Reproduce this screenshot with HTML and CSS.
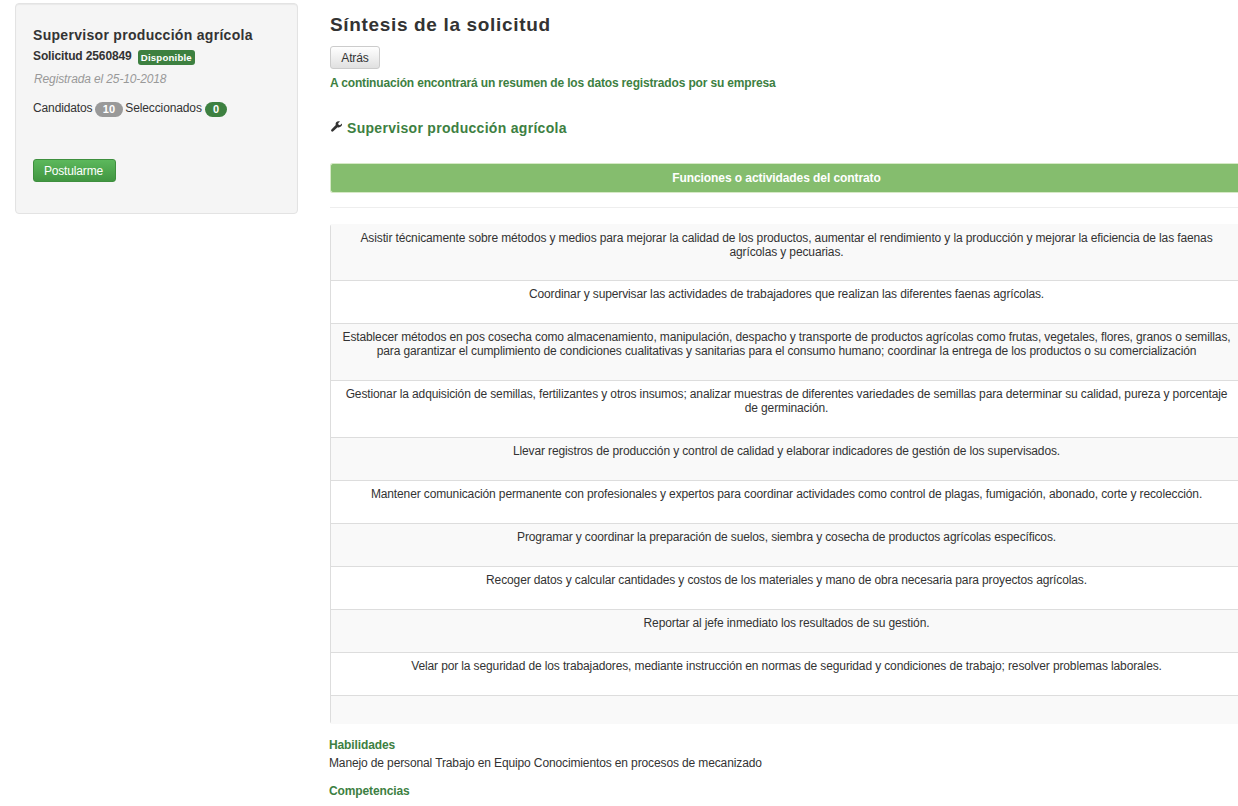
FILE: index.html
```html
<!DOCTYPE html>
<html lang="es">
<head>
<meta charset="utf-8">
<title>Síntesis de la solicitud</title>
<link rel="stylesheet" href="styles.css">
</head>
<body>
<aside class="sidebar">
  <div class="well">
    <h4 class="job-title">Supervisor producción agrícola</h4>
    <div class="req"><strong>Solicitud 2560849</strong> <span class="label">Disponible</span></div>
    <div class="date">Registrada el 25-10-2018</div>
    <div class="counts">Candidatos <span class="badge">10</span> Seleccionados <span class="badge badge-green">0</span></div>
    <button class="btn-apply" type="button">Postularme</button>
  </div>
</aside>
<main class="content">
  <h3 class="page-title">Síntesis de la solicitud</h3>
  <button class="btn-back" type="button">Atrás</button>
  <p class="intro">A continuación encontrará un resumen de los datos registrados por su empresa</p>
  <h4 class="section-title">
    <svg class="wrench" viewBox="0 0 12 12" width="11" height="11" aria-hidden="true"><path d="M12 2.8 9.8 4.6 8.2 4 7.8 2.4 9.8.5C8.2-.2 6.6.2 5.7 1.4 5 2.3 4.9 3.4 5.2 4.4L.5 9.4C-.1 10 0 10.8.5 11.3c.5.5 1.3.6 1.9 0L7.2 6.8C8.4 7.2 9.8 7 10.8 6.1 11.8 5.2 12.2 4 12 2.8Z"/></svg>
    Supervisor producción agrícola
  </h4>
  <div class="bar">Funciones o actividades del contrato</div>
  <hr class="rule">
  <div class="rows">
    <div class="row odd">Asistir técnicamente sobre métodos y medios para mejorar la calidad de los productos, aumentar el rendimiento y la producción y mejorar la eficiencia de las faenas agrícolas y pecuarias.</div>
    <div class="row">Coordinar y supervisar las actividades de trabajadores que realizan las diferentes faenas agrícolas.</div>
    <div class="row odd">Establecer métodos en pos cosecha como almacenamiento, manipulación, despacho y transporte de productos agrícolas como frutas, vegetales, flores, granos o semillas, para garantizar el cumplimiento de condiciones cualitativas y sanitarias para el consumo humano; coordinar la entrega de los productos o su comercialización</div>
    <div class="row">Gestionar la adquisición de semillas, fertilizantes y otros insumos; analizar muestras de diferentes variedades de semillas para determinar su calidad, pureza y porcentaje de germinación.</div>
    <div class="row odd">Llevar registros de producción y control de calidad y elaborar indicadores de gestión de los supervisados.</div>
    <div class="row">Mantener comunicación permanente con profesionales y expertos para coordinar actividades como control de plagas, fumigación, abonado, corte y recolección.</div>
    <div class="row odd">Programar y coordinar la preparación de suelos, siembra y cosecha de productos agrícolas específicos.</div>
    <div class="row">Recoger datos y calcular cantidades y costos de los materiales y mano de obra necesaria para proyectos agrícolas.</div>
    <div class="row odd">Reportar al jefe inmediato los resultados de su gestión.</div>
    <div class="row">Velar por la seguridad de los trabajadores, mediante instrucción en normas de seguridad y condiciones de trabajo; resolver problemas laborales.</div>
    <div class="row odd empty"></div>
  </div>
  <div class="block">
    <h5 class="block-title">Habilidades</h5>
    <p class="block-text">Manejo de personal Trabajo en Equipo Conocimientos en procesos de mecanizado</p>
  </div>
  <div class="block">
    <h5 class="block-title">Competencias</h5>
  </div>
</main>
</body>
</html>
```
FILE: styles.css
```css
html, body {
  margin: 0;
  height: 806px;
  overflow: hidden;
}
body {
  display: flex;
  align-items: flex-start;
  background: #fff;
  color: #333;
  font-family: "Liberation Sans", Arial, sans-serif;
  font-size: 12px;
  line-height: 14.4px;
  letter-spacing: -.125px;
}
.sidebar {
  flex: none;
  width: 283px;
  margin: 3px 0 0 15px;
}
.well {
  box-sizing: border-box;
  height: 211px;
  padding: 23px 17px 0;
  background: #f5f5f5;
  border: 1px solid #e3e3e3;
  border-radius: 4px;
  box-shadow: inset 0 1px 1px rgba(0,0,0,.05);
}
.job-title {
  margin: 0;
  font-size: 14px;
  line-height: 16px;
  font-weight: 700;
  letter-spacing: .3px;
}
.req { margin-top: 6px; }
.req strong { font-weight: 700; }
.label {
  display: inline-block;
  margin-left: 3px;
  padding: 1px 3px;
  background: #3d8040;
  color: #fff;
  border-radius: 3px;
  font-size: 9.6px;
  font-weight: 700;
  line-height: 13px;
  letter-spacing: .2px;
  vertical-align: -1px;
}
.date {
  margin-top: 7px;
  margin-left: 1px;
  color: #999;
  font-style: italic;
}
.counts {
  margin-top: 15px;
  word-spacing: -.9px;
}
.badge {
  display: inline-block;
  box-sizing: border-box;
  padding: 1px 8px;
  background: #999;
  color: #fff;
  border-radius: 10px;
  font-size: 11px;
  font-weight: 700;
  line-height: 13px;
  letter-spacing: 0;
  text-align: center;
  vertical-align: -1px;
}
.badge-green {
  margin-left: 1px;
  background: #3d8040;
}
.btn-apply {
  display: block;
  box-sizing: border-box;
  width: 83px;
  height: 23px;
  margin-top: 42px;
  padding: 0 2px 0 0;
  color: #fff;
  font: 12px "Liberation Sans", Arial, sans-serif;
  letter-spacing: -.15px;
  background: linear-gradient(#5cb85c, #419641);
  border: 1px solid #3e8f3e;
  border-radius: 3px;
}
.content {
  flex: none;
  width: 912px;
  margin-left: 32px;
}
.page-title {
  margin: 14px 0 10px;
  font-size: 19px;
  line-height: 22px;
  font-weight: 700;
  letter-spacing: .66px;
}
.btn-back {
  display: block;
  box-sizing: border-box;
  width: 50px;
  height: 23px;
  padding: 0;
  color: #333;
  font: 12px "Liberation Sans", Arial, sans-serif;
  letter-spacing: -.1px;
  background: linear-gradient(#fff, #e0e0e0);
  border: 1px solid #ccc;
  border-radius: 3px;
}
.intro {
  margin: 7px 0 0;
  color: #3d7f42;
  font-weight: 700;
  letter-spacing: -.16px;
}
.section-title {
  display: flex;
  align-items: center;
  gap: 5px;
  margin: 30px 0 0 1px;
  color: #3d7f42;
  font-size: 14px;
  line-height: 16px;
  font-weight: 700;
  letter-spacing: .3px;
}
.wrench { flex: none; fill: #333; margin-top: -3px; }
.bar {
  box-sizing: border-box;
  height: 30px;
  margin-top: 27px;
  padding-right: 20px;
  background: #85bd6e;
  border: 1px solid #d6e9c6;
  border-right: 0;
  border-radius: 3px 0 0 3px;
  color: #fff;
  font-weight: 700;
  line-height: 29px;
  letter-spacing: -.08px;
  text-align: center;
}
.rule {
  height: 1px;
  margin: 14px 0 16px;
  border: 0;
  background: #eee;
}
.rows {
  margin-bottom: 1px;
  border-left: 1px solid #ddd;
  border-radius: 3px 0 0 3px;
}
.row {
  padding: 6px 8px 22px;
  border-top: 1px solid #ddd;
  line-height: 14px;
  text-align: center;
}
.row:first-child {
  padding-top: 7px;
  padding-bottom: 21px;
  border-top: 0;
}
.odd { background: #f9f9f9; }
.empty { height: 29px; box-sizing: border-box; padding: 0; }
.block { margin-top: 14px; margin-left: -1px; }
.block-title {
  margin: 0;
  color: #3d7f42;
  font-size: 12px;
  line-height: 14.4px;
  font-weight: 700;
}
.block-text { margin: 3px 0 0; }
```
